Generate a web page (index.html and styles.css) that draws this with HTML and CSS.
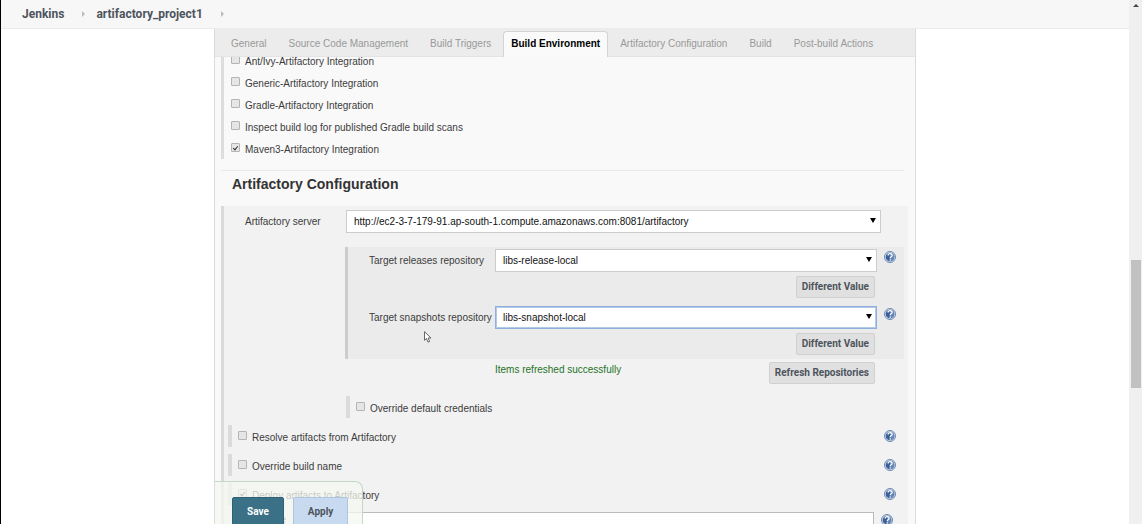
FILE: index.html
```html
<!DOCTYPE html>
<html lang="en">
<head>
<meta charset="utf-8">
<title>artifactory_project1 Config [Jenkins]</title>
<link rel="stylesheet" href="styles.css">
</head>
<body>
<svg class="defs" width="0" height="0" aria-hidden="true">
  <symbol id="help" viewBox="0 0 24 24">
    <circle cx="12" cy="12" r="11" fill="#d7e0ed" stroke="#6b88b4" stroke-width="2"/>
    <circle cx="12" cy="12" r="8.6" fill="#3a5f9a"/>
    <path d="M12 3.4a8.6 8.6 0 0 1 8.6 8.6c0 5-4 8.6-8.6 8.6z" fill="#6484b5"/>
    <path d="M8.2 9.2c0-5 8-5 8-.4 0 2.8-3.8 3-3.8 5.8" fill="none" stroke="#fff" stroke-width="2.6"/>
    <circle cx="12.3" cy="18" r="1.6" fill="#fff"/>
  </symbol>
</svg>
<div class="window">
  <div class="page">
    <header class="crumbs">
      <a href="#">Jenkins</a><span class="sep"></span>
      <a href="#">artifactory_project1</a><span class="sep"></span>
    </header>
    <main class="main">
      <form class="panel">
        <nav class="tabs">
          <a class="tab" href="#">General</a>
          <a class="tab" href="#">Source Code Management</a>
          <a class="tab" href="#">Build Triggers</a>
          <a class="tab active" href="#">Build Environment</a>
          <a class="tab" href="#">Artifactory Configuration</a>
          <a class="tab" href="#">Build</a>
          <a class="tab" href="#">Post-build Actions</a>
        </nav>
        <div class="body">
          <div class="options">
            <label class="check"><input type="checkbox">Ant/Ivy-Artifactory Integration</label>
            <label class="check"><input type="checkbox">Generic-Artifactory Integration</label>
            <label class="check"><input type="checkbox">Gradle-Artifactory Integration</label>
            <label class="check"><input type="checkbox">Inspect build log for published Gradle build scans</label>
            <label class="check"><input type="checkbox" checked>Maven3-Artifactory Integration</label>
          </div>
          <h2 class="title">Artifactory Configuration</h2>
          <section class="config">
            <div class="server">
              <label for="server">Artifactory server</label>
              <div class="select"><select id="server"><option>http://ec2-3-7-179-91.ap-south-1.compute.amazonaws.com:8081/artifactory</option></select></div>
            </div>
            <div class="nested">
              <div class="repo">
                <label for="rel">Target releases repository</label>
                <div class="select"><select id="rel"><option>libs-release-local</option></select></div>
                <a class="help" href="#" aria-label="Help"><svg><use href="#help"/></svg></a>
                <button class="btn" type="button">Different Value</button>
              </div>
              <div class="repo">
                <label for="snap">Target snapshots repository</label>
                <div class="select focus"><select id="snap"><option>libs-snapshot-local</option></select></div>
                <a class="help" href="#" aria-label="Help"><svg><use href="#help"/></svg></a>
                <button class="btn" type="button">Different Value</button>
              </div>
            </div>
            <div class="refresh">
              <span class="status">Items refreshed successfully</span>
              <button class="btn" type="button">Refresh Repositories</button>
            </div>
            <div class="row inner">
              <label class="check"><input type="checkbox">Override default credentials</label>
            </div>
            <div class="row">
              <label class="check"><input type="checkbox">Resolve artifacts from Artifactory</label>
              <a class="help" href="#" aria-label="Help"><svg><use href="#help"/></svg></a>
            </div>
            <div class="row">
              <label class="check"><input type="checkbox">Override build name</label>
              <a class="help" href="#" aria-label="Help"><svg><use href="#help"/></svg></a>
            </div>
            <div class="row">
              <label class="check"><input type="checkbox" checked>Deploy artifacts to Artifactory</label>
              <a class="help" href="#" aria-label="Help"><svg><use href="#help"/></svg></a>
            </div>
            <div class="last">
              <label for="last">e</label>
              <input id="last" class="text" type="text">
              <a class="help" href="#" aria-label="Help"><svg><use href="#help"/></svg></a>
            </div>
          </section>
        </div>
        <div class="actions">
          <button class="save" type="button">Save</button>
          <button class="apply" type="button">Apply</button>
        </div>
      </form>
    </main>
  </div>
  <div class="scrollbar"><span class="up"></span><span class="thumb"></span></div>
</div>
<svg class="cursor" viewBox="0 0 8 12" aria-hidden="true"><path d="M.5.7v8.6l2-1.8 1.5 3.7 1.6-.7-1.5-3.5h2.9z" fill="#fff" stroke="#444" stroke-width=".8"/></svg>
</body>
</html>
```
FILE: styles.css
```css
* { box-sizing: border-box; }
body {
  margin: 0;
  height: 100vh;
  overflow: hidden;
  background: #fff;
  color: #3c3c3c;
  font: 10px/14px "Liberation Sans", Arial, sans-serif;
}
a { color: inherit; text-decoration: none; }
button, input, select { margin: 0; font: inherit; }
.defs { position: absolute; }
.window { display: flex; height: 100%; border-left: 1px solid #000; }
.page { flex: 1; min-width: 0; display: flex; flex-direction: column; }

.crumbs {
  display: flex;
  align-items: center;
  flex: none;
  height: 29px;
  padding: 0 21px 1px;
  background: #f7f7f7;
  border-bottom: 1px solid #ebebeb;
  color: #4d545d;
  font: bold 12px/16px Roboto, sans-serif;
}
.sep {
  margin: 0 11px 0 18px;
  border-left: 3px solid #bbb;
  border-top: 3px solid transparent;
  border-bottom: 3px solid transparent;
}

.main { flex: 1; min-height: 0; padding: 0 213px; }
.panel {
  position: relative;
  height: 100%;
  overflow: hidden;
  background: #f9f9f9;
  border: solid #dcdcdc;
  border-width: 0 1px;
}
.tabs {
  position: relative;
  z-index: 1;
  display: flex;
  height: 28px;
  padding: 2px 4px 0 5px;
  background: #ececec;
  border-bottom: 1px solid #e4e4e4;
  color: #999;
}
.tab {
  height: 26px;
  padding: 5px 11px 0;
  white-space: nowrap;
  line-height: 16px;
}
.tab.active {
  margin: 0 1px;
  padding: 4px 7px 0;
  background: #fafafa;
  border: 1px solid #d4d4d4;
  border-bottom: 0;
  border-radius: 4px 4px 0 0;
  color: #000;
  font-weight: bold;
}

.body { padding: 0 7px 0 6px; }
.options {
  display: flex;
  flex-direction: column;
  margin-top: -8px;
  padding-left: 7px;
  border-left: 3px solid #ddd;
}
.check { display: flex; align-items: center; gap: 5px; height: 22px; padding-top: 4px; }
.check input {
  appearance: none;
  display: grid;
  place-items: center;
  width: 9px;
  height: 9px;
  margin-bottom: 6px;
  background: #e6e6e6;
  border: 1px solid #b4b4b4;
  border-radius: 1px;
}
.check input:checked::after {
  content: "";
  width: 2px;
  height: 4px;
  border: solid #333;
  border-width: 0 1px 1px 0;
  transform: rotate(40deg);
}
.title {
  margin: 11px 4px 0 0;
  padding: 4px 0 13px 11px;
  border-top: 1px solid #e9e9e9;
  color: #333;
  font-size: 14px;
  line-height: 18px;
}

.config {
  padding: 4px 4px 0 0;
  background: #f2f2f2;
  border-left: 3px solid #d9d9d9;
}
.server {
  display: grid;
  grid-template-columns: 101px 1fr;
  align-items: center;
  margin-left: 21px;
  padding-right: 23px;
}
.select { position: relative; }
.select::after {
  content: "";
  position: absolute;
  top: 8px;
  right: 5px;
  border: solid transparent;
  border-width: 5px 3px 0;
  border-top-color: #000;
}
select {
  appearance: none;
  display: block;
  width: 100%;
  height: 23px;
  padding: 0 20px 0 7px;
  background: #fff;
  border: 1px solid #ccc;
  border-radius: 0;
  color: #111;
}
.focus select { border-color: #8fb0de; outline: 1px solid #b4cbe8; outline-offset: -2px; }
.nested {
  display: grid;
  gap: 8px;
  margin: 14px 0 0 121px;
  padding: 2px 7px 4px 21px;
  background: #ebebeb;
  border-left: 3px solid #ccc;
}
.repo {
  display: grid;
  grid-template-columns: 126px 1fr 20px;
  row-gap: 4px;
}
.repo label { align-self: center; white-space: nowrap; }
.repo .help { margin-left: 7px; padding-top: 2px; }
.repo .btn { grid-column: 2; justify-self: end; margin-right: 2px; }
.help svg { display: block; width: 12px; height: 12px; }
.btn {
  height: 22px;
  padding: 0 5px;
  background: #e0e0e0;
  border: 1px solid #d0d0d0;
  border-radius: 2px;
  color: #4d545d;
  font: bold 10px/14px Roboto, sans-serif;
}
.refresh {
  display: flex;
  justify-content: space-between;
  margin: 3px 29px 12px 271px;
}
.status { color: #267326; padding-top: 1px; }
.row {
  display: flex;
  align-items: center;
  justify-content: space-between;
  height: 22px;
  margin: 0 8px 7px 4px;
  padding-left: 6px;
  border-left: 4px solid #dbdbdb;
}
.row.inner { margin-left: 122px; }
.last {
  display: grid;
  grid-template-columns: 58px 1fr 18px;
  column-gap: 7px;
  margin: 0 5px 0 4px;
}
.last label { padding-top: 3px; text-align: right; line-height: 10px; }
.last .help { padding-top: 2px; }
.text { height: 23px; min-width: 0; border: 1px solid #bbb; background: #fff; }

.actions {
  position: absolute;
  left: 0;
  bottom: 0;
  z-index: 2;
  display: flex;
  align-items: flex-start;
  gap: 9px;
  height: 43px;
  padding: 15px 14px 0 17px;
  background: rgba(244, 248, 240, .75);
  border: solid #c3d8cc;
  border-width: 1px 1px 0 0;
  border-radius: 0 8px 0 0;
}
.save, .apply {
  height: 30px;
  padding: 0 14px;
  border-radius: 2px;
  font: bold 10px/14px Roboto, sans-serif;
}
.save { background: #3b7187; border: 1px solid #2f6075; color: #fff; }
.apply { background: #c8daf0; border: 1px solid #afc5df; color: #4d545d; }

.scrollbar {
  display: grid;
  grid-template-rows: 260fr 128fr 136fr;
  flex: none;
  width: 13px;
  padding: 0 1px 0 2px;
  background: #f0f0f0;
}
.up {
  justify-self: center;
  align-self: start;
  margin-top: 4px;
  border: solid transparent;
  border-width: 0 3px 3px;
  border-bottom-color: #444;
}
.thumb { background: #c1c1c1; }
.cursor { position: absolute; left: 424px; top: 331px; width: 8px; height: 12px; }
```
